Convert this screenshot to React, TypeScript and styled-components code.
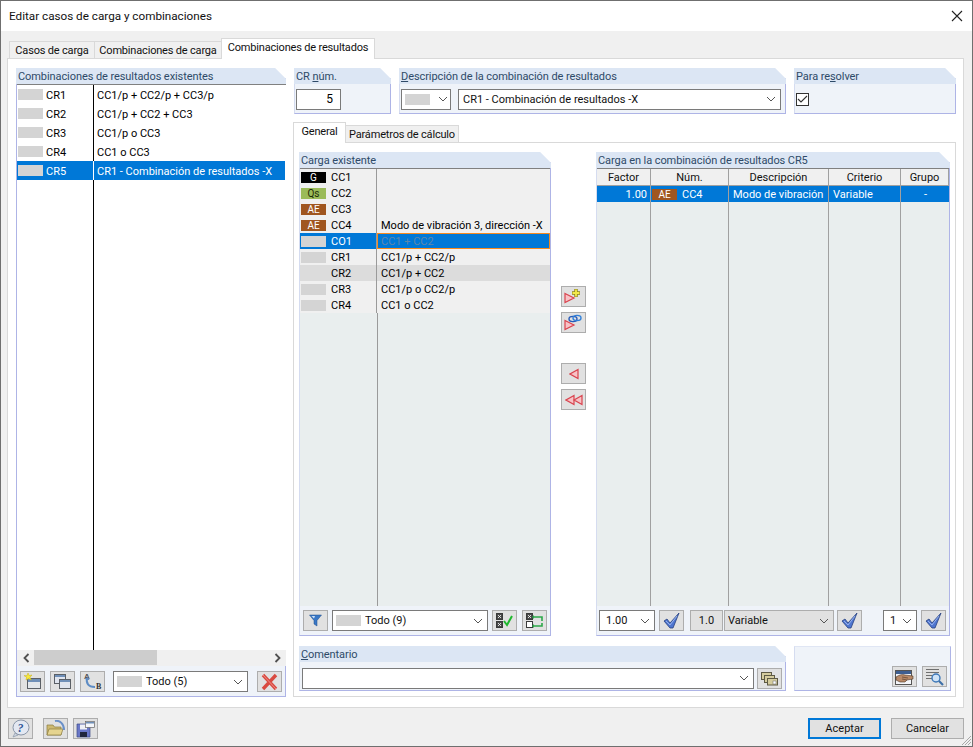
import React from "react";
import styled, { createGlobalStyle } from "styled-components";

const Global = createGlobalStyle`
  html, body { margin: 0; padding: 0; background: #f0f0f0; }
  body { font-family: Roboto, "Noto Sans", "Liberation Sans", sans-serif; font-size: 11px; color: #000; }
  * { box-sizing: border-box; }
`;

const Frame = styled.div`
  width: 973px; height: 747px; display: flex; flex-direction: column;
  border: 1px solid #6f6f6f; background: #f0f0f0; position: relative; overflow: hidden;
`;
const TitleBar = styled.div`
  height: 30px; flex: none; background: #fff; display: flex; align-items: center; justify-content: space-between;
  padding: 0 9px 0 8px; font-size: 11.7px; color: #111;
`;
const Body = styled.div`
  flex: 1; min-height: 0; display: flex; flex-direction: column; padding: 0 8px 0 6px;
`;
const TabStrip = styled.div`
  height: 28px; flex: none; display: flex; align-items: flex-end; padding-left: 2px; position: relative; z-index: 1;
  margin-bottom: -1px;
`;
const Tab = styled.div<{ $active?: boolean; $w: number }>`
  width: ${p => p.$w}px; height: ${p => (p.$active ? 21 : 18)}px;
  background: ${p => (p.$active ? "#fff" : "#f0f0f0")};
  border: 1px solid #d9d9d9; border-bottom: ${p => (p.$active ? "none" : "1px solid #d9d9d9")};
  margin-right: -1px; letter-spacing: -0.18px;
  display: flex; align-items: center; justify-content: center; white-space: nowrap;
  padding-bottom: ${p => (p.$active ? 3 : 0)}px; color: #111;
`;
const MainPanel = styled.div`
  flex: 1; min-height: 0; background: #fff; border: 1px solid #d9d9d9; display: flex; gap: 7px;
  padding: 9px 7px 10px 8px;
`;
const Footer = styled.div`
  height: 38px; flex: none; display: flex; align-items: flex-start; padding: 10px 0 0 1px; gap: 10px;
`;
const Spacer = styled.div`flex: 1;`;
const DialogButton = styled.div<{ $primary?: boolean }>`
  width: 73px; height: 21px; display: flex; align-items: center; justify-content: center;
  background: #e1e1e1; border: ${p => (p.$primary ? "2px solid #0078d7" : "1px solid #adadad")}; color: #111;
`;
const Grip = styled.svg`
  position: absolute; right: 0; bottom: 0;
`;

const Section = styled.div<{ $w?: number; $grow?: boolean }>`
  ${p => (p.$w ? `width: ${p.$w}px; flex: none;` : "")}
  ${p => (p.$grow ? "flex: 1; min-width: 0;" : "")}
  display: flex; flex-direction: column; background: #eff3f9;
  border-right: 1px solid #aeb4e6; border-bottom: 1px solid #aeb4e6; border-left: 1px solid #d5dcf0;
  clip-path: polygon(0 0, calc(100% - 11px) 0, 100% 11px, 100% 100%, 0 100%);
`;
const SectionHeader = styled.div`
  height: 16px; flex: none; background: #dce6f4; color: #2e4a68; margin: 0 -1px; padding-left: 2px; line-height: 17px;
  white-space: nowrap; letter-spacing: -0.08px;
  & u { text-underline-offset: 1px; }
`;
const LeftColumn = styled(Section)`
  width: 270px; flex: none; border-left-color: #aeb4e6;
`;
const List = styled.div`
  flex: 1; min-height: 0; display: flex; flex-direction: column; background: #fff; border-top: 1px solid #808080;
  margin-right: -1px;
`;
const CrRow = styled.div<{ $sel?: boolean }>`
  height: 19px; flex: none; display: grid; grid-template-columns: 76px 1fr; align-items: stretch;
  background: ${p => (p.$sel ? "#0078d7" : "#fff")}; color: ${p => (p.$sel ? "#fff" : "#000")};
  margin-right: 1px;
`;
const CrCode = styled.div`
  display: flex; align-items: center; gap: 3px; padding-left: 1px;
`;
const CrLabel = styled.span`
  margin-top: 2px;
`;
const CrText = styled.div<{ $sel?: boolean }>`
  display: flex; align-items: center; padding: 2px 0 0 3px; white-space: nowrap;
  border-left: 1px solid ${p => (p.$sel ? "#fff" : "#000")};
`;
const CrFill = styled.div`
  flex: 1; width: 77px; border-right: 1px solid #000;
`;
const Swatch = styled.span<{ $bg?: string; $fg?: string; $w?: number; $h?: number }>`
  width: ${p => p.$w ?? 25}px; height: ${p => p.$h ?? 11}px; flex: none; background: ${p => p.$bg ?? "#d4d4d4"};
  color: ${p => p.$fg ?? "#fff"}; display: inline-flex; align-items: center; justify-content: center;
  font-size: 10px; line-height: 11px;
`;
const ScrollBar = styled.div`
  height: 16px; flex: none; background: #f0f0f0; display: flex; align-items: center; justify-content: space-between;
  padding: 0 5px 0 6px; margin-right: -1px; position: relative;
`;
const ScrollThumb = styled.div`
  position: absolute; left: 17px; top: 0; width: 123px; height: 15px; background: #cdcdcd;
`;
const Toolbar = styled.div<{ $h?: number; $pl?: number; $pt?: number }>`
  flex: none; height: ${p => p.$h ?? 30}px; display: flex; align-items: center; gap: 5px;
  padding: ${p => p.$pt ?? 0}px 0 0 ${p => p.$pl ?? 3}px;
`;
const Btn = styled.div<{ $w?: number; $ml?: number; $mr?: number }>`
  width: ${p => p.$w ?? 25}px; height: 21px; flex: none; background: #e1e1e1; border: 1px solid #adadad;
  display: flex; align-items: center; justify-content: center; color: #111;
  margin-left: ${p => p.$ml ?? 0}px; margin-right: ${p => p.$mr ?? 0}px;
`;
const Combo = styled.div<{ $w?: number; $gray?: boolean; $grow?: boolean; $ml?: number; $mr?: number }>`
  ${p => (p.$grow ? "flex: 1; min-width: 0;" : `width: ${p.$w}px; flex: none;`)}
  height: 21px; background: ${p => (p.$gray ? "#e1e1e1" : "#fff")}; border: 1px solid ${p => (p.$gray ? "#adadad" : "#7a7a7a")};
  display: flex; align-items: center; padding: 0 4px 0 3px; gap: 4px; white-space: nowrap; color: #111;
  margin-left: ${p => p.$ml ?? 0}px; margin-right: ${p => p.$mr ?? 0}px;
`;
const ComboText = styled.span<{ $pl?: number }>`
  flex: 1; min-width: 0; padding-left: ${p => p.$pl ?? 0}px; overflow: hidden;
`;
const RightColumn = styled.div`
  flex: 1; min-width: 0; display: flex; flex-direction: column;
`;
const TopRow = styled.div`
  height: 46px; flex: none; display: flex; gap: 8px; padding-left: 1px;
`;
const SectionBody = styled.div<{ $pl?: number }>`
  flex: 1; display: flex; align-items: center; gap: 7px; padding: 0 4px 0 ${p => p.$pl ?? 1}px; margin-top: 1px;
`;
const NumInput = styled.div`
  width: 45px; height: 21px; border: 1px solid #7a7a7a; background: #fff; text-align: right; padding-right: 7px;
  line-height: 19px; font-size: 12px;
`;
const CheckBox = styled.div`
  width: 13px; height: 13px; border: 1px solid #333; background: #fff; display: flex; align-items: center; justify-content: center;
`;
const InnerStrip = styled.div`
  height: 21px; margin-top: 8px; flex: none; display: flex; align-items: flex-end; position: relative; z-index: 1; margin-bottom: -1px;
`;
const InnerPanel = styled.div`
  flex: 1; min-height: 0; border: 1px solid #d9d9d9; background: #fff; padding: 9px 5px 5px; display: flex; flex-direction: column; gap: 10px;
`;
const WorkRow = styled.div`
  flex: 1; min-height: 0; display: flex;
`;
const BottomRow = styled.div`
  height: 45px; flex: none; display: flex; gap: 8px;
`;
const LoadList = styled.div`
  flex: 1; min-height: 0; display: flex; flex-direction: column; background: #e9eeee; border-top: 1px solid #808080;
`;
const LoadRow = styled.div<{ $sel?: boolean; $alt?: boolean }>`
  height: 16px; flex: none; display: grid; grid-template-columns: 77px 1fr;
  background: ${p => (p.$sel ? "#0078d7" : p.$alt ? "#dcdcdc" : "#f0f0f0")}; color: ${p => (p.$sel ? "#fff" : "#000")};
`;
const LoadCode = styled.div`
  display: flex; align-items: center; gap: 5px; padding-left: 1px; border-right: 1px solid #9a9a9a;
`;
const LoadText = styled.div<{ $edit?: boolean }>`
  display: flex; align-items: center; white-space: nowrap; padding-left: 4px; min-width: 0;
  ${p => (p.$edit ? "outline: 1px solid #f58a1f; outline-offset: -1px; color: #5c87ad;" : "")}
`;
const LoadFill = styled.div`
  flex: 1; width: 78px; border-right: 1px solid #9a9a9a;
`;
const MidColumn = styled.div`
  flex: 1; display: flex; flex-direction: column; align-items: center; gap: 5px; padding-top: 134px;
`;
const MidGap = styled.div`height: 20px;`;
const TableGrid = styled.div`
  flex: 1; min-height: 0; display: grid; grid-template-columns: 54px 78px 100px 72px 1fr; grid-template-rows: 17px 16px 1fr;
  border-top: 1px solid #808080; background: #e9eeee;
`;
const HeadCell = styled.div`
  background: #f0f0f0; display: flex; align-items: center; justify-content: center; border-right: 1px solid #a0a0a0;
  border-bottom: 1px solid #a0a0a0; color: #111;
  &:last-of-type { border-right: none; }
`;
const BodyCell = styled.div<{ $align?: string; $last?: boolean; $pl?: number }>`
  background: #0078d7; color: #fff; display: flex; align-items: center; white-space: nowrap; gap: 5px;
  padding: 0 3px 0 ${p => p.$pl ?? 4}px; justify-content: ${p => p.$align ?? "flex-start"}; border-right: ${p => (p.$last ? "none" : "1px solid #a0a0a0")};
`;
const FillCell = styled.div<{ $last?: boolean }>`
  border-right: ${p => (p.$last ? "none" : "1px solid #a0a0a0")};
`;
const CommentBody = styled.div`
  flex: 1; display: flex; align-items: center; gap: 3px; padding: 4px 3px 0 2px;
`;
const ToolsBox = styled.div`
  width: 157px; flex: none; background: #eff3f9; border-right: 1px solid #aeb4e6; border-bottom: 1px solid #aeb4e6;
  border-left: 1px solid #d5dcf0; border-top: 1px solid #e0e6f4;
  display: flex; align-items: flex-end; justify-content: flex-end; gap: 5px; padding: 0 3px 3px 0;
`;

const Chevron = () => (
  <svg width="10" height="6" viewBox="0 0 10 6" style={{ flex: "none" }}><path d="M1 1l4 4 4-4" fill="none" stroke="#555" strokeWidth="1" /></svg>
);
const Close = () => (
  <svg width="12" height="12" viewBox="0 0 12 12"><path d="M1 1l10 10M11 1L1 11" stroke="#222" strokeWidth="1.1" /></svg>
);
const Win = ({ x, y, w, h, fill = "#dfe4ee" }: { x: number; y: number; w: number; h: number; fill?: string }) => (
  <g>
    <rect x={x + .5} y={y + .5} width={w} height={h} fill={fill} stroke="#5a5f66" />
    <rect x={x + 1} y={y + 1} width={w - 1} height={2} fill="#6f8fb8" />
  </g>
);
const IconNew = () => (
  <svg width="19" height="17" viewBox="0 0 19 17">
    <rect x="4.5" y="5.5" width="13" height="10" fill="#e2e6ea" stroke="#5a5f66" />
    <rect x="5" y="6" width="12" height="3" fill="#6f8fb8" />
    <path d="M5 0l1.2 2.6L9 2 7 4.2 8.3 7 5.6 5.7 3 7 3.6 4.2 1 2.6l3 .1z" fill="#f7e93c" stroke="#c9b112" strokeWidth=".5" />
  </svg>
);
const IconCopy = () => (
  <svg width="19" height="17" viewBox="0 0 19 17">
    <Win x={1} y={1} w={11} h={9} />
    <Win x={6} y={6} w={11} h={9} />
  </svg>
);
const IconRenum = () => (
  <svg width="21" height="19" viewBox="0 0 21 19">
    <text x="2" y="7" fontSize="8" fontFamily="Liberation Sans" fontWeight="700" fill="#555">A</text>
    <text x="14" y="17" fontSize="8" fontFamily="Liberation Serif" fontWeight="700" fill="#333">B</text>
    <path d="M5 6c-1 5 1 9 8 9" fill="none" stroke="#5e8cc4" strokeWidth="2" />
    <path d="M5.5 5l-2 3h4z" fill="#5e8cc4" />
  </svg>
);
const IconDelete = () => (
  <svg width="19" height="18" viewBox="0 0 19 18">
    <path d="M3 2l13 14M16 2L3 16" stroke="#d94a40" strokeWidth="3.4" />
    <path d="M3 2l13 14" stroke="#f08a84" strokeWidth="1" />
  </svg>
);
const IconHelp = () => (
  <svg width="21" height="19" viewBox="0 0 21 19">
    <ellipse cx="11" cy="8.5" rx="8" ry="7.5" fill="#e3e8f2" stroke="#8a96a8" />
    <path d="M5 14l-2 4 5-2z" fill="#d2d8e4" stroke="#8a96a8" strokeWidth=".7" />
    <text x="7.5" y="13" fontSize="12" fontFamily="Liberation Serif" fontWeight="700" fontStyle="italic" fill="#2f5597">?</text>
  </svg>
);
const IconOpen = () => (
  <svg width="20" height="17" viewBox="0 0 20 17">
    <path d="M1 5h6l1.5 2H15v8H1z" fill="#cdb970" stroke="#8a7b3f" strokeWidth=".7" />
    <path d="M1 15l2-6h14l-2 6z" fill="#e5d48f" stroke="#8a7b3f" strokeWidth=".7" />
    <path d="M9 1c5-1 9 3 9 9" fill="none" stroke="#6a90c8" strokeWidth="2" />
  </svg>
);
const IconSave = () => (
  <svg width="20" height="18" viewBox="0 0 20 18">
    <path d="M1 4h13v13H1z" fill="#6a78c8" stroke="#3e4a86" strokeWidth=".7" />
    <rect x="4" y="4.5" width="7" height="5" fill="#eef0f6" />
    <rect x="4" y="12" width="7" height="5" fill="#22283c" />
    <rect x="9.5" y="1.5" width="9" height="6" fill="#f4f6fa" stroke="#666" strokeWidth=".7" />
    <rect x="10" y="2" width="8" height="1.5" fill="#6f8fb8" />
  </svg>
);
const IconFilter = () => (
  <svg width="13" height="13" viewBox="0 0 13 13">
    <path d="M.5 1h12L8 6.5V12L5 10V6.5z" fill="#3a78c6" stroke="#1f4d8a" strokeWidth=".5" />
    <path d="M2.5 2h3.5L5 4.5z" fill="#cfe2f8" />
  </svg>
);
const MiniBox = ({ x, y, on }: { x: number; y: number; on?: boolean }) => (
  <g>
    <rect x={x + .5} y={y + .5} width="6" height="6" fill={on ? "#4a4a4a" : "#fff"} stroke="#3a3a3a" />
    {on && <path d={`M${x + 2} ${y + 2}l3 3M${x + 5} ${y + 2}l-3 3`} stroke="#fff" strokeWidth=".8" />}
  </g>
);
const IconCheckAll = () => (
  <svg width="19" height="17" viewBox="0 0 19 17">
    <MiniBox x={1} y={1} on /><MiniBox x={1} y={9} on />
    <path d="M9 9l3 4 5-9" fill="none" stroke="#1fb82e" strokeWidth="2" />
  </svg>
);
const IconSwap = () => (
  <svg width="19" height="17" viewBox="0 0 19 17">
    <MiniBox x={1} y={1} on /><MiniBox x={1} y={9} />
    <path d="M9 5h8v4M9 14h8v-3" fill="none" stroke="#2ca84a" strokeWidth="1.6" />
    <path d="M9 3v4l-2-2zM9 12v4l-2-2z" fill="#2ca84a" />
  </svg>
);
const IconBlueCheck = () => (
  <svg width="20" height="18" viewBox="0 0 20 18">
    <path d="M2 9l3-2 3 4 9-10-6 15H8z" fill="#4f76d0" stroke="#27407f" strokeWidth=".8" />
    <path d="M4 9l4 4 7-9" fill="none" stroke="#a9c0f0" strokeWidth=".8" />
  </svg>
);
const IconLibrary = () => (
  <svg width="19" height="15" viewBox="0 0 19 15">
    <rect x="1.5" y="1.5" width="10" height="7" fill="#d5cc9e" stroke="#5e5a44" />
    <rect x="4.5" y="4.5" width="10" height="7" fill="#d5cc9e" stroke="#5e5a44" />
    <rect x="7.5" y="7.5" width="10" height="6.5" fill="#d5cc9e" stroke="#5e5a44" />
    <rect x="13" y="10" width="3" height="3" fill="#fff" stroke="#666" strokeWidth=".5" />
  </svg>
);
const IconHand = () => (
  <svg width="19" height="16" viewBox="0 0 19 16">
    <rect x=".5" y="1.5" width="16" height="14" fill="#f4f6fa" stroke="#555" />
    <rect x="1" y="2" width="15" height="3" fill="#3e5f92" />
    <path d="M1 8c3-2 6-3 9-2l8 1v3l-6 1-2 2H5L1 11z" fill="#b98a68" stroke="#4b3526" strokeWidth=".6" />
    <path d="M7 8l6 1M7 10l5 1" stroke="#4b3526" strokeWidth=".6" />
  </svg>
);
const IconSearchList = () => (
  <svg width="19" height="18" viewBox="0 0 19 18">
    <path d="M1 1.5h13M1 4.5h13M1 7.5h9M1 10.5h7" stroke="#6f6f6f" strokeWidth="1" />
    <circle cx="11" cy="10" r="4" fill="#cfe3f7" stroke="#3d78b8" strokeWidth="1.4" />
    <path d="M14 13l4 4" stroke="#3d6fa8" strokeWidth="2.2" />
  </svg>
);
const Tri = ({ dir, x = 0 }: { dir: "l" | "r"; x?: number }) =>
  dir === "r" ? (
    <path d={`M${x + 1} 3.5l9 4.5-9 4.5z`} fill="#f8c2c6" stroke="#d9434e" strokeWidth="1.2" />
  ) : (
    <path d={`M${x + 9} 3.5L${x + 1} 8l8 4.5z`} fill="#f8c2c6" stroke="#d9434e" strokeWidth="1.2" />
  );
const IconAdd = () => (
  <svg width="19" height="17" viewBox="0 0 19 17">
    <g transform="translate(0,2)"><Tri dir="r" /></g>
    <path d="M12 1v8M8 5h8" stroke="#8d8414" strokeWidth="3.4" />
    <path d="M12 1.5v7M8.5 5h7" stroke="#f3e94b" strokeWidth="1.8" />
  </svg>
);
const IconLink = () => (
  <svg width="19" height="17" viewBox="0 0 19 17">
    <g transform="translate(0,3)"><Tri dir="r" /></g>
    <ellipse cx="9" cy="5" rx="4" ry="2.6" fill="none" stroke="#2759b8" strokeWidth="1.4" />
    <ellipse cx="13" cy="4" rx="4" ry="2.6" fill="none" stroke="#2f7fd8" strokeWidth="1.4" />
  </svg>
);
const IconLeft = () => (
  <svg width="10" height="16" viewBox="0 0 10 16"><Tri dir="l" /></svg>
);
const IconLeftAll = () => (
  <svg width="18" height="16" viewBox="0 0 18 16"><Tri dir="l" /><Tri dir="l" x={8} /></svg>
);

const crs = [
  ["CR1", "CC1/p + CC2/p + CC3/p"],
  ["CR2", "CC1/p + CC2 + CC3"],
  ["CR3", "CC1/p o CC3"],
  ["CR4", "CC1 o CC3"],
  ["CR5", "CR1 - Combinación de resultados -X"],
];
type Load = { code: string; text?: string; bg?: string; fg?: string; label?: string; sel?: boolean; alt?: boolean };
const loads: Load[] = [
  { code: "CC1", bg: "#000", label: "G" },
  { code: "CC2", bg: "#9bbb59", fg: "#1c2a08", label: "Qs" },
  { code: "CC3", bg: "#a0561f", label: "AE" },
  { code: "CC4", bg: "#a0561f", label: "AE", text: "Modo de vibración 3, dirección -X" },
  { code: "CO1", text: "CC1 + CC2", sel: true },
  { code: "CR1", text: "CC1/p + CC2/p" },
  { code: "CR2", text: "CC1/p + CC2", alt: true },
  { code: "CR3", text: "CC1/p o CC2/p" },
  { code: "CR4", text: "CC1 o CC2" },
];

export default function App() {
  return (
    <>
      <Global />
      <Frame>
        <TitleBar>Editar casos de carga y combinaciones<Close /></TitleBar>
        <Body>
          <TabStrip>
            <Tab $w={86}>Casos de carga</Tab>
            <Tab $w={128}>Combinaciones de carga</Tab>
            <Tab $w={154} $active>Combinaciones de resultados</Tab>
          </TabStrip>
          <MainPanel>
            <LeftColumn>
              <SectionHeader>Combinaciones de resultados existentes</SectionHeader>
              <List>
                {crs.map(([c, t], i) => (
                  <CrRow key={c} $sel={i === 4}>
                    <CrCode><Swatch /><CrLabel>{c}</CrLabel></CrCode>
                    <CrText $sel={i === 4}>{t}</CrText>
                  </CrRow>
                ))}
                <CrFill />
              </List>
              <ScrollBar>
                <ScrollThumb />
                <svg width="7" height="10" viewBox="0 0 7 10"><path d="M5.5 1L1.5 5l4 4" fill="none" stroke="#505050" strokeWidth="1.8" /></svg>
                <svg width="7" height="10" viewBox="0 0 7 10"><path d="M1.5 1l4 4-4 4" fill="none" stroke="#505050" strokeWidth="1.8" /></svg>
              </ScrollBar>
              <Toolbar $pl={3} $pt={1}>
                <Btn><IconNew /></Btn>
                <Btn><IconCopy /></Btn>
                <Btn $mr={3}><IconRenum /></Btn>
                <Combo $w={135} $mr={4}><Swatch $w={25} /><ComboText>Todo (5)</ComboText><Chevron /></Combo>
                <Btn><IconDelete /></Btn>
              </Toolbar>
            </LeftColumn>
            <RightColumn>
              <TopRow>
                <Section $w={97}>
                  <SectionHeader>CR <u>n</u>úm.</SectionHeader>
                  <SectionBody><NumInput>5</NumInput></SectionBody>
                </Section>
                <Section $w={387}>
                  <SectionHeader><u>D</u>escripción de la combinación de resultados</SectionHeader>
                  <SectionBody>
                    <Combo $w={50}><Swatch $w={25} /><ComboText /><Chevron /></Combo>
                    <Combo $grow><ComboText $pl={1}>CR1 - Combinación de resultados -X</ComboText><Chevron /></Combo>
                  </SectionBody>
                </Section>
                <Section $w={162}>
                  <SectionHeader>Para re<u>s</u>olver</SectionHeader>
                  <SectionBody>
                    <CheckBox><svg width="11" height="9" viewBox="0 0 11 9"><path d="M1 4l3 3 6-6" fill="none" stroke="#333" strokeWidth="1.1" /></svg></CheckBox>
                  </SectionBody>
                </Section>
              </TopRow>
              <InnerStrip>
                <Tab $w={53} $active>General</Tab>
                <Tab $w={114}>Parámetros de cálculo</Tab>
              </InnerStrip>
              <InnerPanel>
                <WorkRow>
                  <Section $w={252}>
                    <SectionHeader>Carga existente</SectionHeader>
                    <LoadList>
                      {loads.map(l => (
                        <LoadRow key={l.code} $sel={l.sel} $alt={l.alt}>
                          <LoadCode>
                            <Swatch $bg={l.alt ? "#dcdcdc" : l.bg} $fg={l.fg}>{l.label}</Swatch>{l.code}
                          </LoadCode>
                          <LoadText $edit={l.sel}>{l.text}</LoadText>
                        </LoadRow>
                      ))}
                      <LoadFill />
                    </LoadList>
                    <Toolbar $pl={3} $h={29}>
                      <Btn $mr={-1}><IconFilter /></Btn>
                      <Combo $w={156} $mr={-1}><Swatch $w={25} /><ComboText>Todo (9)</ComboText><Chevron /></Combo>
                      <Btn><IconCheckAll /></Btn>
                      <Btn><IconSwap /></Btn>
                    </Toolbar>
                  </Section>
                  <MidColumn>
                    <Btn><IconAdd /></Btn>
                    <Btn><IconLink /></Btn>
                    <MidGap />
                    <Btn><IconLeft /></Btn>
                    <Btn><IconLeftAll /></Btn>
                  </MidColumn>
                  <Section $w={354}>
                    <SectionHeader>Carga en la combinación de resultados CR5</SectionHeader>
                    <TableGrid>
                      <HeadCell>Factor</HeadCell>
                      <HeadCell>Núm.</HeadCell>
                      <HeadCell>Descripción</HeadCell>
                      <HeadCell>Criterio</HeadCell>
                      <HeadCell>Grupo</HeadCell>
                      <BodyCell $align="flex-end">1.00</BodyCell>
                      <BodyCell $pl={1}><Swatch $bg="#a0561f" $w={25}>AE</Swatch>CC4</BodyCell>
                      <BodyCell>Modo de vibración</BodyCell>
                      <BodyCell>Variable</BodyCell>
                      <BodyCell $align="center" $last>-</BodyCell>
                      <FillCell /><FillCell /><FillCell /><FillCell /><FillCell $last />
                    </TableGrid>
                    <Toolbar $pl={2} $h={29}>
                      <Combo $w={56} $mr={-1}><ComboText $pl={3}>1.00</ComboText><Chevron /></Combo>
                      <Btn $mr={1}><IconBlueCheck /></Btn>
                      <Btn $w={33} $mr={-4}>1.0</Btn>
                      <Combo $w={110} $gray $mr={-2}><ComboText>Variable</ComboText><Chevron /></Combo>
                      <Btn $mr={16}><IconBlueCheck /></Btn>
                      <Combo $w={34} $mr={-1}><ComboText $pl={3}>1</ComboText><Chevron /></Combo>
                      <Btn><IconBlueCheck /></Btn>
                    </Toolbar>
                  </Section>
                </WorkRow>
                <BottomRow>
                  <Section $w={487}>
                    <SectionHeader><u>C</u>omentario</SectionHeader>
                    <CommentBody>
                      <Combo $grow><ComboText /><Chevron /></Combo>
                      <Btn><IconLibrary /></Btn>
                    </CommentBody>
                  </Section>
                  <ToolsBox>
                    <Btn><IconHand /></Btn>
                    <Btn><IconSearchList /></Btn>
                  </ToolsBox>
                </BottomRow>
              </InnerPanel>
            </RightColumn>
          </MainPanel>
          <Footer>
            <Btn $mr={0}><IconHelp /></Btn>
            <Btn $mr={-5}><IconOpen /></Btn>
            <Btn><IconSave /></Btn>
            <Spacer />
            <DialogButton $primary>Aceptar</DialogButton>
            <DialogButton>Cancelar</DialogButton>
          </Footer>
        </Body>
        <Grip width="12" height="12" viewBox="0 0 12 12">
          <path d="M11 2L2 11M11 5l-6 6M11 8l-3 3" stroke="#a8a8a8" strokeWidth="1" />
        </Grip>
      </Frame>
    </>
  );
}
